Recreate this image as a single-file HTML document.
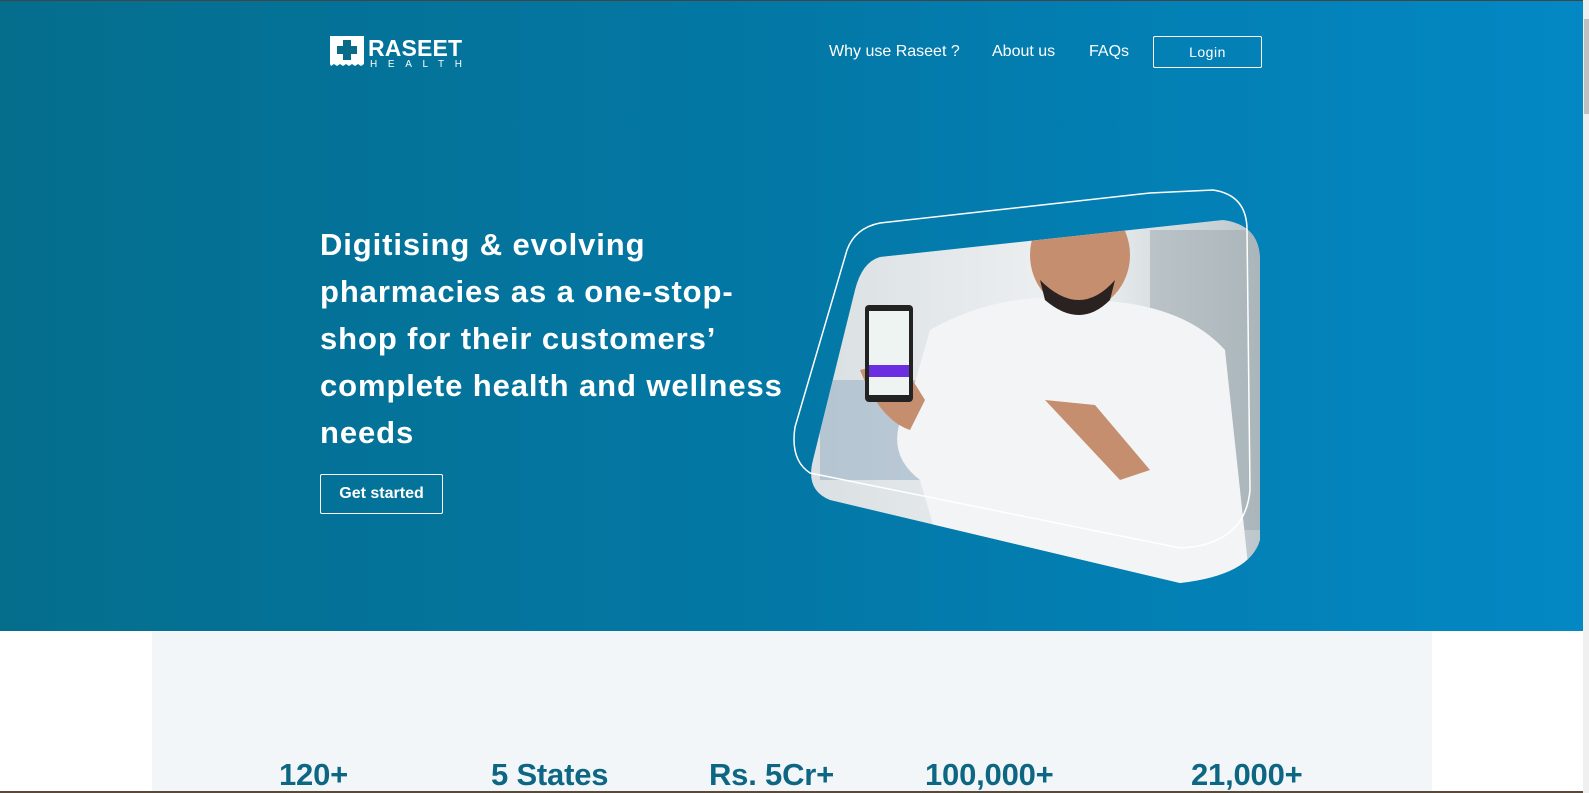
<!DOCTYPE html>
<html><head><meta charset="utf-8">
<style>
*{margin:0;padding:0;box-sizing:border-box}
html,body{width:1589px;height:793px;overflow:hidden;background:#fff;font-family:"Liberation Sans",sans-serif}
.top{position:absolute;left:0;top:0;width:1589px;height:1px;background:#444}
.hero{position:absolute;left:0;top:1px;width:1583px;height:630px;background:linear-gradient(90deg,#056e8d 0%,#0378a6 50%,#0388c4 100%)}
.sb{position:absolute;left:1583px;top:0;width:6px;height:793px;background:#f0f0f0}
.sbt{position:absolute;left:1584px;top:19px;width:5px;height:95px;background:#c1c1c1}
.nav a{position:absolute;color:#fff;font-size:16px;top:43px;text-decoration:none}
.login{position:absolute;left:1153px;top:36px;width:109px;height:32px;border:1px solid #fff;border-radius:2px;color:#fff;font-size:14px;text-align:center;line-height:30px;letter-spacing:.5px}
h1{position:absolute;left:320px;top:221px;color:#fff;font-size:31px;line-height:47px;font-weight:bold;letter-spacing:.9px;white-space:nowrap}
.btn{position:absolute;left:320px;top:474px;width:123px;height:40px;border:1px solid #fff;border-radius:2px;color:#fff;font-size:16px;font-weight:bold;text-align:center;line-height:38px}
.gray{position:absolute;left:152px;top:631px;width:1280px;height:162px;background:#f2f6f9}
.stat{position:absolute;top:757px;color:#0d6783;font-size:31px;font-weight:bold;letter-spacing:-.2px}
.strip{position:absolute;left:0;top:791px;width:1583px;height:2px;background:#5a4a3a}
</style></head><body>
<div class="top"></div>
<div class="hero"></div>
<div class="sb"></div><div class="sbt"></div>
<svg style="position:absolute;left:330px;top:36px" width="140" height="32" viewBox="0 0 140 32">
<path d="M0 0H34V28l-3 2-3-2-3 2-3-2-3 2-3-2-3 2-3-2-3 2-3-2-3 2L0 28Z" fill="#fff"/>
<rect x="13" y="4" width="8" height="20" fill="#0a6b88"/><rect x="7" y="10" width="20" height="8" fill="#0a6b88"/>
<text x="38" y="20" fill="#fff" font-family="Liberation Sans" font-weight="bold" font-size="23" textLength="94">RASEET</text>
<text x="40" y="31" fill="#fff" font-family="Liberation Sans" font-size="10" textLength="92">HEALTH</text>
</svg>
<div class="nav"><a style="left:829px">Why use Raseet ?</a><a style="left:992px">About us</a><a style="left:1089px">FAQs</a></div>
<div class="login">Login</div>
<h1>Digitising &amp; evolving<br>pharmacies as a one-stop-<br>shop for their customers’<br>complete health and wellness<br>needs</h1>
<div class="btn">Get started</div>
<svg style="position:absolute;left:0;top:0" width="1583" height="631">
<defs><linearGradient id="bg" x1="0" x2="1"><stop offset="0" stop-color="#d9dfe2"/><stop offset="0.6" stop-color="#eef1f2"/><stop offset="1" stop-color="#b9c4c9"/></linearGradient>
<clipPath id="c"><path d="M880 257 L1223 220 Q1260 225 1260 260 L1260 540 Q1250 575 1180 583 L830 500 Q805 490 813 460 L855 290 Q862 262 880 257Z"/></clipPath></defs>
<g clip-path="url(#c)">
<rect x="800" y="200" width="470" height="400" fill="url(#bg)"/>
<rect x="820" y="380" width="100" height="100" fill="#8fa9c0" opacity=".5"/>
<rect x="1150" y="230" width="110" height="300" fill="#9aa6ab" opacity=".5"/>
<path d="M930 330 Q1000 290 1080 300 Q1180 300 1225 350 L1250 583 L950 583 L920 480 Q880 450 910 400Z" fill="#f3f4f6"/>
<ellipse cx="1080" cy="255" rx="50" ry="55" fill="#c58f6f"/>
<path d="M1010 210 Q1020 150 1080 150 Q1140 150 1135 210 Q1120 190 1080 195 Q1040 195 1025 240Z" fill="#1b1a1c"/>
<path d="M1040 280 Q1080 320 1115 280 L1110 300 Q1080 330 1045 300Z" fill="#2a2220"/>
<path d="M1045 400 L1095 405 L1150 470 L1120 480 Z" fill="#c58f6f"/>
<path d="M860 370 Q880 420 910 430 L925 400 L900 360Z" fill="#c58f6f"/>
<rect x="865" y="305" width="48" height="97" rx="4" fill="#222"/>
<rect x="869" y="311" width="40" height="84" fill="#eef4f1"/>
<rect x="869" y="365" width="40" height="12" fill="#6b2ee0"/>
</g>
<path d="M880 223 L1150 193 L1213 190 Q1247 195 1247 230 L1250 490 Q1245 545 1180 548 L810 473 Q790 460 795 427 L847 250 Q855 228 880 223Z" fill="none" stroke="#fff" stroke-width="1.5"/>
</svg>
<div class="gray"></div>
<div class="stat" style="left:279px">120+</div>
<div class="stat" style="left:491px">5 States</div>
<div class="stat" style="left:709px">Rs. 5Cr+</div>
<div class="stat" style="left:925px">100,000+</div>
<div class="stat" style="left:1191px">21,000+</div>
<div class="strip"></div>
</body></html>
